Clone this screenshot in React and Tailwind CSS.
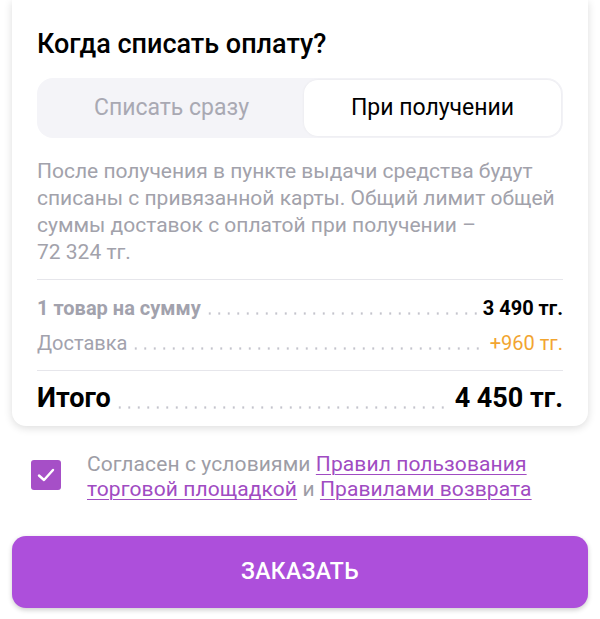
import React from "react";

function Leader({ mb = "mb-[6px]" }) {
  return (
    <span className={"flex-1 self-end mx-[4px] h-[3px] bg-[radial-gradient(circle,#c4c4cc_1px,transparent_1.3px)] bg-[length:9.5px_3px] bg-repeat-x " + mb} />
  );
}

export default function App() {
  return (
    <div className="w-[600px] h-[619px] bg-white overflow-hidden font-['Roboto',sans-serif]">
      <div className="mx-[12px] bg-white rounded-b-[14px] shadow-[0_2px_8px_rgba(0,0,0,0.14)] px-[25px] pt-[28px] pb-[12px]">
        <h2 className="text-[27px] leading-[32px] font-medium text-black">Когда списать оплату?</h2>
        <div className="mt-[18px] h-[60px] bg-[#f4f4f8] rounded-[16px] p-[2px] flex">
          <div className="flex-1 flex items-center justify-center text-[23px] text-[#a9a9b3]">Списать сразу</div>
          <div className="w-[257px] flex items-center justify-center text-[23px] text-black bg-white rounded-[14px] shadow-[0_0_3px_rgba(0,0,0,0.06)]">При получении</div>
        </div>
        <p className="mt-[20px] text-[21px] leading-[27px] text-[#a2a2ab] whitespace-nowrap">
          После получения в пункте выдачи средства будут<br />
          списаны с привязанной карты. Общий лимит общей<br />
          суммы доставок с оплатой при получении –<br />
          72 324 тг.
        </p>
        <div className="mt-[13px] h-px bg-[#e6e6eb]" />
        <div className="pt-[15px] flex items-end text-[20px] leading-[26px]">
          <span className="font-bold text-[#a2a2ad]">1 товар на сумму</span>
          <Leader />
          <span className="font-bold text-black">3 490 тг.</span>
        </div>
        <div className="mt-[9px] flex items-end text-[20px] leading-[26px]">
          <span className="text-[#a2a2ad]">Доставка</span>
          <Leader />
          <span className="text-[#f2a531]">+960 тг.</span>
        </div>
        <div className="mt-[14px] h-px bg-[#e6e6eb]" />
        <div className="pt-[11px] flex items-end text-[27px] leading-[32px] font-bold text-black">
          <span>Итого</span>
          <Leader mb="mb-[5px]" />
          <span>4 450 тг.</span>
        </div>
      </div>

      <div className="mt-[26px] flex items-start pl-[31px] pr-[20px]">
        <div className="mt-[8px] w-[30px] h-[30px] rounded-[3px] bg-[#a64fc7] flex items-center justify-center shrink-0">
          <svg width="20" height="16" viewBox="0 0 20 16" fill="none">
            <path d="M3 8.5 L8 13 L17 3" stroke="white" strokeWidth="2.4" strokeLinecap="round" strokeLinejoin="round" />
          </svg>
        </div>
        <p className="ml-[26px] text-[21px] leading-[25px] text-[#9d9da6] whitespace-nowrap tracking-[0.1px]">
          Согласен с условиями{" "}
          <span className="text-[#a04bc2] underline underline-offset-[3px] decoration-[1px]">Правил пользования</span>
          <br />
          <span className="text-[#a04bc2] underline underline-offset-[3px] decoration-[1px]">торговой площадкой</span>{" "}
          и{" "}
          <span className="text-[#a04bc2] underline underline-offset-[3px] decoration-[1px]">Правилами возврата</span>
        </p>
      </div>

      <button className="mt-[34px] mx-[12px] w-[576px] h-[72px] rounded-[14px] bg-[#ad4fdb] shadow-[0_2px_5px_rgba(0,0,0,0.2)] text-white text-[23px] font-medium tracking-[0.3px] flex items-center justify-center">
        ЗАКАЗАТЬ
      </button>
    </div>
  );
}
